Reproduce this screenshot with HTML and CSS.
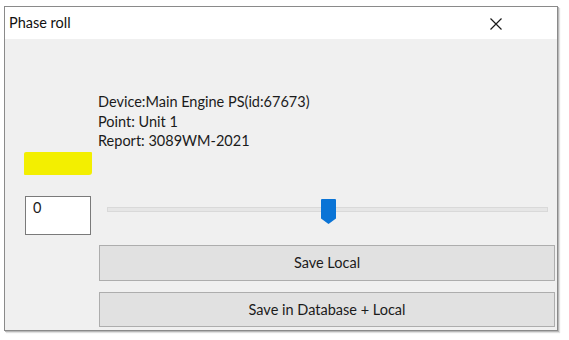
FILE: index.html
```html
<!DOCTYPE html>
<html>
<head>
<meta charset="utf-8">
<link rel="stylesheet" href="styles.css">
</head>
<body>
<div class="window">
  <div class="titlebar">
    <span class="title">Phase roll</span>
    <svg class="close" width="12" height="12" viewBox="0 0 12 12"><path d="M0.5 0.5 L11.5 11.5 M11.5 0.5 L0.5 11.5" stroke="#1a1a1a" stroke-width="1.2" fill="none"/></svg>
  </div>
  <div class="content">
    <div class="info">
      <div>Device:Main Engine PS(id:67673)</div>
      <div>Point: Unit 1</div>
      <div>Report: 3089WM-2021</div>
    </div>
    <div class="highlight"></div>
    <div class="controls">
      <div class="numbox">0</div>
      <div class="slider">
        <div class="track"></div>
        <svg class="thumb" width="15" height="25" viewBox="0 0 15 25"><path d="M1 0 H14 Q15 0 15 1 V19.5 L7.5 25 L0 19.5 V1 Q0 0 1 0 Z" fill="#0a74d6"/></svg>
      </div>
    </div>
    <div class="buttons">
      <div class="btn btn-first">Save Local</div>
      <div class="btn btn-second">Save in Database + Local</div>
    </div>
  </div>
</div>
</body>
</html>
```

FILE: styles.css
```css
html, body {
  margin: 0;
  padding: 0;
  background: #ffffff;
}
body {
  width: 569px;
  height: 340px;
  overflow: hidden;
  font-family: Lato, "Noto Sans", sans-serif;
  font-size: 14.5px;
  color: #1b1b1b;
}
.window {
  margin: 6px 0 0 4px;
  width: 552px;
  height: 323px;
  border: 1px solid #8a8a8a;
  box-shadow: 1px 1px 0 #b8b8b8, 2px 2px 1px rgba(0,0,0,0.12);
  background: #f0f0f0;
  display: flex;
  flex-direction: column;
}
.titlebar {
  height: 32px;
  background: #ffffff;
  display: flex;
  align-items: center;
  justify-content: space-between;
  padding: 0 55px 0 4px;
}
.title {
  font-size: 14.5px;
  color: #111;
  margin-top: -1px;
}
.close {
  display: block;
  margin-top: 1px;
}
.content {
  flex: 1;
  display: flex;
  flex-direction: column;
  padding-top: 53px;
}
.info {
  margin-left: 93px;
  line-height: 19.5px;
}
.highlight {
  margin: 1px 0 0 19px;
  width: 68px;
  height: 23px;
  background: #f3ef00;
  border-radius: 2px 1px 3px 1px;
}
.controls {
  margin-top: 21px;
  display: flex;
  align-items: flex-start;
}
.numbox {
  margin-left: 20px;
  width: 57px;
  height: 37px;
  border: 1px solid #7a7a7a;
  background: #fff;
  padding-left: 7px;
  line-height: 22px;
}
.slider {
  position: relative;
  margin: 3px 0 0 16px;
  width: 441px;
  height: 25px;
}
.track {
  margin-top: 8px;
  height: 3px;
  border: 1px solid #d9d9d9;
  background: #e6e6e6;
}
.thumb {
  position: absolute;
  left: 214px;
  top: 0;
}
.buttons {
  margin: 10px 0 0 94px;
  display: flex;
  flex-direction: column;
  gap: 11px;
}
.btn {
  width: 454px;
  background: #e1e1e1;
  border: 1px solid #adadad;
  display: flex;
  align-items: center;
  justify-content: center;
}
.btn-first {
  height: 34px;
}
.btn-second {
  height: 33px;
}
```
